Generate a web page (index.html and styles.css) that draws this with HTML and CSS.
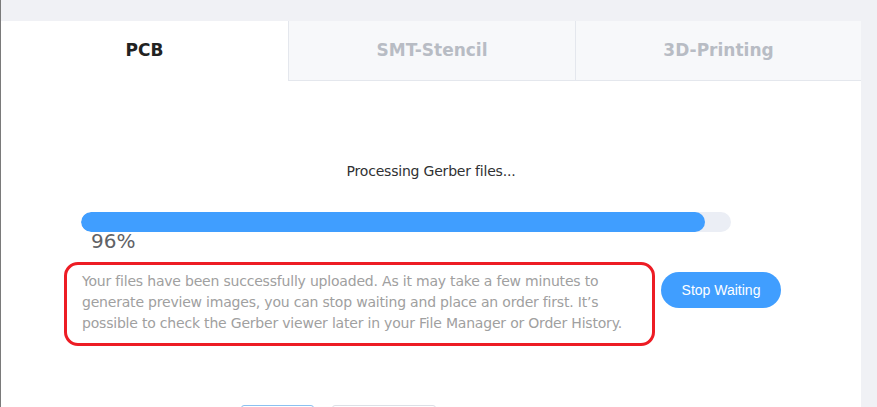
FILE: index.html
```html
<!DOCTYPE html>
<html lang="en">
<head>
<meta charset="utf-8">
<title>Upload Gerber</title>
<link rel="stylesheet" href="styles.css">
</head>
<body>
<div class="page">
  <div class="panel">
    <div class="tabs">
      <div class="tab active">PCB</div>
      <div class="tab">SMT-Stencil</div>
      <div class="tab">3D-Printing</div>
    </div>
    <div class="content">
      <div class="status">Processing Gerber files...</div>
      <div class="progress">
        <div class="track"><div class="fill" style="width:96%"></div></div>
        <div class="percent">96%</div>
      </div>
      <div class="message-row">
        <div class="notice">
          <p class="notice-text">Your files have been successfully uploaded. As it may take a few minutes to<br>generate preview images, you can stop waiting and place an order first. It’s<br>possible to check the Gerber viewer later in your File Manager or Order History.</p>
        </div>
        <button class="stop-btn" type="button">Stop Waiting</button>
      </div>
      <div class="actions">
        <div class="action primary"></div>
        <div class="action secondary"></div>
      </div>
    </div>
  </div>
</div>
</body>
</html>
```

FILE: styles.css
```css
html, body {
  margin: 0;
  padding: 0;
  height: 100%;
  overflow: hidden;
}
body {
  background: #f0f1f5;
  font-family: "DejaVu Sans", Verdana, sans-serif;
}
.page {
  border-left: 1px solid #7a7a7a;
  padding-top: 21px;
  height: 100%;
  box-sizing: border-box;
}
.panel {
  width: 860px;
  height: 100%;
  background: #fff;
}
.tabs {
  display: grid;
  grid-template-columns: 287px 287px 286px;
  height: 60px;
}
.tab {
  display: flex;
  align-items: center;
  justify-content: center;
  font-weight: bold;
  font-size: 17px;
  color: #b8bcc4;
  background: #f7f8fa;
  border-bottom: 1px solid #e4e7ed;
  border-left: 1px solid #e4e7ed;
  box-sizing: border-box;
  padding-bottom: 2px;
}
.tab.active {
  background: #fff;
  color: #222;
  border-bottom-color: transparent;
  border-left: none;
}
.content {
  padding: 80px 80px 0 80px;
}
.status {
  font-size: 14px;
  letter-spacing: -0.2px;
  line-height: 20px;
  color: #303133;
  text-align: center;
}
.progress {
  margin-top: 31px;
}
.track {
  width: 650px;
  height: 20px;
  border-radius: 10px;
  background: #ebeef5;
  overflow: hidden;
}
.fill {
  height: 100%;
  border-radius: 10px;
  background: #409eff;
}
.percent {
  font-size: 20px;
  line-height: 18px;
  color: #606266;
  padding-left: 10px;
}
.message-row {
  display: flex;
  align-items: flex-start;
  gap: 6px;
  margin: 12px 0 0 -17px;
}
.notice {
  flex: 0 0 591px;
  height: 84px;
  box-sizing: border-box;
  border: 3px solid #ed1c24;
  border-radius: 14px;
  padding: 6px 0 0 15px;
}
.notice-text {
  margin: 0;
  font-size: 14px;
  letter-spacing: -0.2px;
  line-height: 21px;
  color: #a0a0a0;
  white-space: nowrap;
}
.stop-btn {
  flex: 0 0 120px;
  margin-top: 10px;
  height: 36px;
  border: none;
  border-radius: 18px;
  background: #409eff;
  color: #fff;
  font-family: "Liberation Sans", Arial, sans-serif;
  font-size: 14px;
  padding: 0;
}
.actions {
  display: flex;
  gap: 18px;
  margin: 59px 0 0 160px;
}
.action {
  height: 36px;
  box-sizing: border-box;
  border-radius: 3px;
}
.action.primary {
  width: 73px;
  border: 1px solid #8cc0f0;
}
.action.secondary {
  width: 104px;
  border: 1px solid #dcdfe6;
}
```
